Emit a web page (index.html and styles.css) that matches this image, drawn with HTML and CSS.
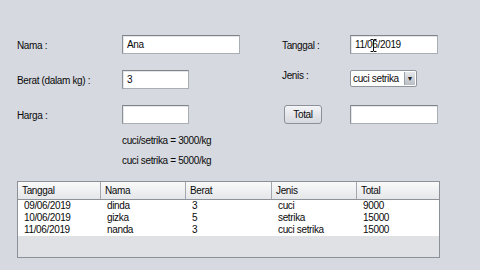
FILE: index.html
```html
<!DOCTYPE html>
<html lang="en">
<head>
    <meta charset="UTF-8">
    <meta name="viewport" content="width=device-width, initial-scale=1.0">
    <title>Laundry</title>
    <link rel="stylesheet" href="styles.css">
</head>
<body>

    <div class="page">

        <!-- Form fields -->
        <div class="form">
            <label class="lbl">Nama :</label>
            <div class="field"><input class="txt wide" type="text" value="Ana"></div>
            <label class="lbl">Tanggal :</label>
            <div class="field date-field">
                <input class="txt date" type="text" value="11/06/2019">
                <!-- mouse pointer over the field -->
                <svg class="ibeam" width="7" height="13" viewBox="0 0 7 13">
                    <path d="M0.5 0.5h2.5l0.5 0.5l0.5-0.5h2.5M3.5 1v11M0.5 12.5h2.5l0.5-0.5l0.5 0.5h2.5" fill="none" stroke="#111" stroke-width="1"/>
                </svg>
            </div>

            <label class="lbl">Berat (dalam kg) :</label>
            <div class="field"><input class="txt short" type="text" value="3"></div>
            <label class="lbl lbl-up">Jenis :</label>
            <div class="field">
                <div class="combo">
                    <span class="combo-text">cuci setrika</span>
                    <span class="combo-btn">&#9660;</span>
                </div>
            </div>

            <label class="lbl">Harga :</label>
            <div class="field"><input class="txt short" type="text" value=""></div>
            <div class="field"><button class="btn">Total</button></div>
            <div class="field"><input class="txt date" type="text" value=""></div>
        </div>

        <!-- Price notes -->
        <div class="notes">
            <p>cuci/setrika = 3000/kg</p>
            <p>cuci setrika = 5000/kg</p>
        </div>

        <!-- Data table -->
        <div class="table">
            <div class="thead">
                <div class="th">Tanggal</div>
                <div class="th">Nama</div>
                <div class="th">Berat</div>
                <div class="th">Jenis</div>
                <div class="th">Total</div>
            </div>
            <div class="tr">
                <div class="td">09/06/2019</div>
                <div class="td">dinda</div>
                <div class="td">3</div>
                <div class="td">cuci</div>
                <div class="td">9000</div>
            </div>
            <div class="tr">
                <div class="td">10/06/2019</div>
                <div class="td">gizka</div>
                <div class="td">5</div>
                <div class="td">setrika</div>
                <div class="td">15000</div>
            </div>
            <div class="tr">
                <div class="td">11/06/2019</div>
                <div class="td">nanda</div>
                <div class="td">3</div>
                <div class="td">cuci setrika</div>
                <div class="td">15000</div>
            </div>
        </div>

    </div>

</body>
</html>
```

FILE: styles.css
```css
body {
    margin: 0;
    background-color: #d6d9e0;
    font-family: "Liberation Sans", Arial, sans-serif;
    font-size: 10px;
    letter-spacing: -0.35px;
    color: #0a0a0a;
}
.page {
    padding: 35px 0 0 17px;
}
.form {
    display: grid;
    grid-template-columns: 105px 160px 68px 90px;
    grid-auto-rows: 19px;
    row-gap: 16px;
}
.lbl {
    display: flex;
    align-items: center;
    padding-top: 1px;
}
.lbl-up {
    align-items: flex-start;
    padding-top: 0;
}
.field {
    display: flex;
    align-items: flex-start;
}
.date-field {
    position: relative;
}
.ibeam {
    position: absolute;
    left: 20px;
    top: 4px;
}
.txt {
    height: 19px;
    box-sizing: border-box;
    padding: 0 4px;
    border: 1px solid #a9adb4;
    border-top-color: #7f838a;
    border-left-color: #8c9097;
    background: #fff;
    font-family: inherit;
    font-size: 10px;
    letter-spacing: inherit;
    color: #0a0a0a;
    box-shadow: inset 1px 1px 0 #e3e5e8;
}
.wide {
    width: 118px;
}
.short {
    width: 67px;
}
.date {
    width: 88px;
}
.combo {
    display: flex;
    width: 67px;
    height: 17px;
    box-sizing: border-box;
    border: 1px solid #8f939a;
    background: #fff;
    border-radius: 2px;
    white-space: nowrap;
}
.combo-text {
    flex: 1;
    padding-left: 2px;
    line-height: 15px;
    overflow: hidden;
}
.combo-btn {
    width: 10px;
    margin: 1px;
    background: linear-gradient(#e6e8ec, #b9bdc5);
    border-left: 1px solid #9aa0a8;
    font-size: 7px;
    letter-spacing: 0;
    line-height: 13px;
    text-align: center;
    color: #222;
}
.btn {
    margin-left: 2px;
    width: 38px;
    height: 19px;
    padding: 0;
    border: 1px solid #8d9099;
    border-radius: 3px;
    background: linear-gradient(#f4f5f7, #d5d8de);
    font-family: inherit;
    font-size: 10px;
    letter-spacing: inherit;
    color: #0a0a0a;
}
.notes {
    margin: 7px 0 0 105px;
}
.notes p {
    margin: 0;
    line-height: 20px;
}
.table {
    margin-top: 10px;
    width: 423px;
    height: 77px;
    box-sizing: border-box;
    border: 1px solid #8c9097;
    background: #dfe1e5;
}
.thead, .tr {
    display: grid;
    grid-template-columns: 83px 85px 86px 85px 82px;
}
.thead {
    height: 17px;
    background: linear-gradient(#fafafa, #e4e6e9);
    border-bottom: 1px solid #8e9299;
}
.th {
    padding-left: 4px;
    line-height: 17px;
    border-right: 1px solid #a3a7ae;
}
.th:last-child {
    border-right: none;
}
.tr {
    height: 12px;
    background: #fff;
}
.td {
    padding-left: 6px;
    line-height: 12px;
}
```
